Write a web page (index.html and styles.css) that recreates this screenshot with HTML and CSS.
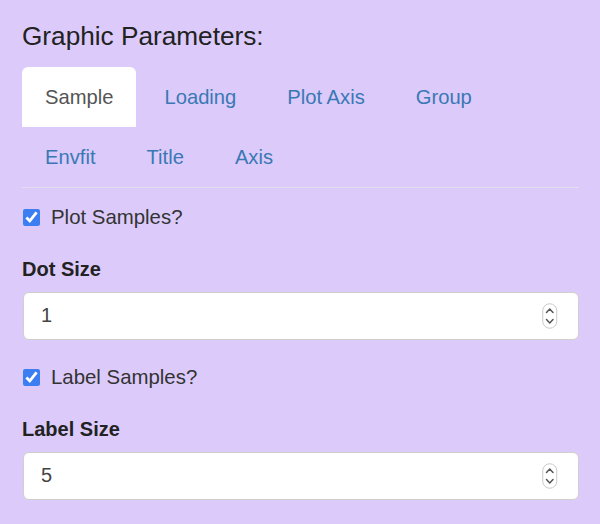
FILE: index.html
```html
<!DOCTYPE html>
<html lang="en">
<head>
<meta charset="utf-8">
<title>Graphic Parameters</title>
<link rel="stylesheet" href="styles.css">
</head>
<body>
<div class="panel">
  <h4 class="title">Graphic Parameters:</h4>
  <ul class="tabs">
    <li class="tab active"><a>Sample</a></li>
    <li class="tab"><a>Loading</a></li>
    <li class="tab"><a>Plot Axis</a></li>
    <li class="tab"><a>Group</a></li>
    <li class="tab"><a>Envfit</a></li>
    <li class="tab"><a>Title</a></li>
    <li class="tab"><a>Axis</a></li>
  </ul>
  <div class="tab-content">
    <label class="check"><input type="checkbox" checked><span>Plot Samples?</span></label>
    <div class="group">
      <label class="field-label">Dot Size</label>
      <div class="num-input">
        <input type="text" value="1">
        <svg class="stepper" width="16" height="26" viewBox="0 0 16 26">
          <rect x="0.75" y="0.75" width="14" height="24.5" rx="7" fill="#fff" stroke="#c9c9c9" stroke-width="1"/>
          <path d="M4.5 9.5 L7.75 6 L11 9.5" fill="none" stroke="#555" stroke-width="1.5" stroke-linecap="round" stroke-linejoin="round"/>
          <path d="M4.5 16.5 L7.75 20 L11 16.5" fill="none" stroke="#555" stroke-width="1.5" stroke-linecap="round" stroke-linejoin="round"/>
        </svg>
      </div>
    </div>
    <label class="check"><input type="checkbox" checked><span>Label Samples?</span></label>
    <div class="group">
      <label class="field-label">Label Size</label>
      <div class="num-input">
        <input type="text" value="5">
        <svg class="stepper" width="16" height="26" viewBox="0 0 16 26">
          <rect x="0.75" y="0.75" width="14" height="24.5" rx="7" fill="#fff" stroke="#c9c9c9" stroke-width="1"/>
          <path d="M4.5 9.5 L7.75 6 L11 9.5" fill="none" stroke="#555" stroke-width="1.5" stroke-linecap="round" stroke-linejoin="round"/>
          <path d="M4.5 16.5 L7.75 20 L11 16.5" fill="none" stroke="#555" stroke-width="1.5" stroke-linecap="round" stroke-linejoin="round"/>
        </svg>
      </div>
    </div>
  </div>
</div>
</body>
</html>
```
FILE: styles.css
```css
html, body {
  margin: 0;
  padding: 0;
}
body {
  background: #dccbfa;
  font-family: "Liberation Sans", Arial, Helvetica, sans-serif;
  color: #333;
}
.panel {
  padding: 22px 21px 0 22px;
}
.title {
  margin: 0 0 16px 0;
  font-size: 26.2px;
  font-weight: normal;
  line-height: 1.1;
  color: #222;
}
.tabs {
  list-style: none;
  margin: 0;
  padding: 0;
  display: flex;
  flex-wrap: wrap;
  border-bottom: 1px solid #e4dcef;
}
.tab {
  height: 60px;
  line-height: 60px;
  padding: 0 23px;
  margin-right: 5px;
  font-size: 20.2px;
  border-radius: 6px 6px 0 0;
}
.tab a {
  color: #3a78b5;
}
.tab.active {
  background: #fff;
}
.tab.active a {
  color: #555;
}
.tab-content {
  display: flex;
  flex-direction: column;
}
.check {
  display: flex;
  align-items: center;
  height: 28px;
  margin-top: 16px;
  font-size: 20.4px;
  color: #333;
}
.check input {
  width: 17px;
  height: 17px;
  margin: 0 11px 0 1px;
  accent-color: #3b7ef1;
}
.group {
  display: flex;
  flex-direction: column;
  margin-top: 23px;
}
.group + .check {
  margin-top: 24px;
}
.field-label {
  font-size: 20px;
  font-weight: bold;
  line-height: 28px;
  margin-bottom: 9px;
  color: #222;
}
.num-input {
  display: flex;
  align-items: center;
  height: 48px;
  box-sizing: border-box;
  margin-left: 1px;
  border: 1px solid #cfcfcf;
  border-radius: 6px;
  background: #fff;
  padding: 0 20px 0 17px;
}
.num-input input {
  flex: 1;
  border: 0;
  outline: none;
  padding: 0;
  font-family: inherit;
  font-size: 20px;
  color: #444;
  background: transparent;
}
.stepper {
  flex: none;
}
```
